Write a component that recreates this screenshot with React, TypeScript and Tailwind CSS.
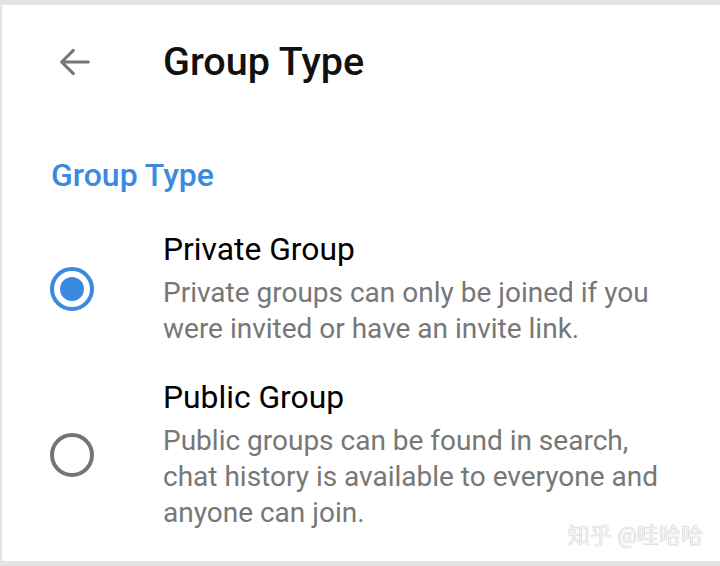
import React from "react";

function Radio({ checked }: { checked: boolean }) {
  return (
    <svg width="48" height="48" viewBox="0 0 48 48">
      <circle cx="24" cy="24" r="20" fill="none" stroke={checked ? "#3b8ae0" : "#757575"} strokeWidth="4" />
      {checked && <circle cx="24" cy="24" r="12" fill="#3b8ae0" />}
    </svg>
  );
}

export default function App() {
  return (
    <div
      className="w-[720px] h-[566px] bg-white border-t-[5px] border-b-[5px] border-l-2 border-[#e4e4e4] overflow-hidden relative"
      style={{ fontFamily: "Roboto, 'Noto Sans CJK SC', sans-serif" }}
    >
      <div className="h-[114px] flex items-center">
        <div className="w-[161px] pl-[53px] flex items-center">
          <svg width="40" height="40" viewBox="0 0 24 24" fill="none" stroke="#757575" strokeWidth="1.8" strokeLinecap="round" strokeLinejoin="round">
            <path d="M20 12H4M11 5l-7 7 7 7" />
          </svg>
        </div>
        <div className="text-[39.5px] leading-[44px] font-medium text-[#111]">Group Type</div>
      </div>
      <div className="mt-[38px] pl-[49px] text-[32px] leading-[36px] font-medium text-[#3b8ae0]">Group Type</div>
      <div className="mt-[38px] flex flex-col gap-[32px]">
        <div className="flex items-center">
          <div className="w-[161px] pl-[46px]"><Radio checked /></div>
          <div className="flex flex-col gap-[8px]">
            <div className="text-[31.8px] leading-[36px] text-black">Private Group</div>
            <div className="text-[28px] leading-[36px] text-[#777]">
              Private groups can only be joined if you
              <br />
              were invited or have an invite link.
            </div>
          </div>
        </div>
        <div className="flex items-center">
          <div className="w-[161px] pl-[46px]"><Radio checked={false} /></div>
          <div className="flex flex-col gap-[8px]">
            <div className="text-[31.8px] leading-[36px] text-black">Public Group</div>
            <div className="text-[28px] leading-[36px] text-[#777]">
              Public groups can be found in search,
              <br />
              chat history is available to everyone and
              <br />
              anyone can join.
            </div>
          </div>
        </div>
      </div>
      <div
        className="absolute right-[17px] bottom-[12px] text-[22px] leading-[26px] text-[#f4f4f4]"
        style={{ textShadow: "0 0 1px #9a9a9a" }}
      >
        知乎 @哇哈哈
      </div>
    </div>
  );
}
